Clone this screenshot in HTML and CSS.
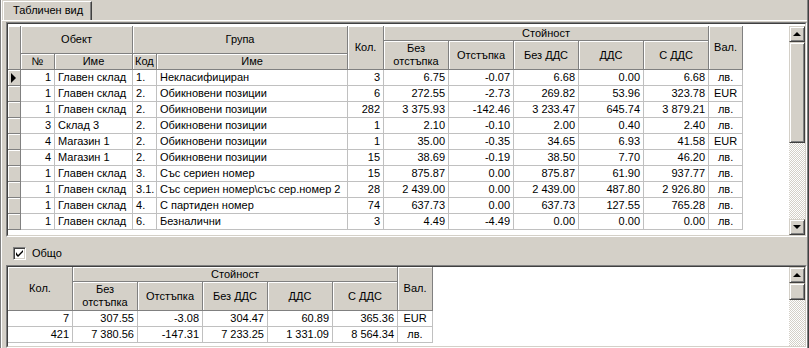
FILE: index.html
```html
<!DOCTYPE html>
<html lang="bg">
  <head>
    <meta charset="UTF-8" />
    <title>Табличен вид</title>
    <link rel="stylesheet" href="styles.css">
  </head>
  <body>
    <div class="window">
      <div class="tabs">
        <div class="tab">Табличен вид</div>
      </div>
      <div class="page">
        <!-- main grid -->
        <div class="grid grid-main">
          <div class="grid-inner">
            <div class="grid-body">
              <table class="tbl tbl-main">
                <colgroup>
                  <col class="w-ind"><col class="w-no"><col class="w-obj"><col class="w-code"><col class="w-grp">
                  <col class="w-qty"><col class="w-val"><col class="w-val"><col class="w-val"><col class="w-val"><col class="w-val">
                  <col class="w-cur">
                </colgroup>
                <thead>
                  <tr class="ha">
                    <th class="ind" rowspan="3"></th>
                    <th colspan="2" rowspan="2">Обект</th>
                    <th colspan="2" rowspan="2">Група</th>
                    <th rowspan="3">Кол.</th>
                    <th colspan="5">Стойност</th>
                    <th rowspan="3">Вал.</th>
                  </tr>
                  <tr class="hb">
                    <th rowspan="2">Без<br>отстъпка</th>
                    <th rowspan="2">Отстъпка</th>
                    <th rowspan="2">Без ДДС</th>
                    <th rowspan="2">ДДС</th>
                    <th rowspan="2">С ДДС</th>
                  </tr>
                  <tr class="hc">
                    <th>№</th>
                    <th>Име</th>
                    <th class="left">Код</th>
                    <th>Име</th>
                  </tr>
                </thead>
                <tbody>
                  <tr>
                    <td class="ind"><span class="cursor"></span></td>
                    <td class="num">1</td><td>Главен склад</td><td>1.</td><td>Некласифициран</td>
                    <td class="num">3</td><td class="num">6.75</td><td class="num">-0.07</td><td class="num">6.68</td><td class="num">0.00</td><td class="num">6.68</td><td class="cur">лв.</td>
                  </tr>
                  <tr>
                    <td class="ind"></td>
                    <td class="num">1</td><td>Главен склад</td><td>2.</td><td>Обикновени позиции</td>
                    <td class="num">6</td><td class="num">272.55</td><td class="num">-2.73</td><td class="num">269.82</td><td class="num">53.96</td><td class="num">323.78</td><td class="cur">EUR</td>
                  </tr>
                  <tr>
                    <td class="ind"></td>
                    <td class="num">1</td><td>Главен склад</td><td>2.</td><td>Обикновени позиции</td>
                    <td class="num">282</td><td class="num">3&nbsp;375.93</td><td class="num">-142.46</td><td class="num">3&nbsp;233.47</td><td class="num">645.74</td><td class="num">3&nbsp;879.21</td><td class="cur">лв.</td>
                  </tr>
                  <tr>
                    <td class="ind"></td>
                    <td class="num">3</td><td>Склад 3</td><td>2.</td><td>Обикновени позиции</td>
                    <td class="num">1</td><td class="num">2.10</td><td class="num">-0.10</td><td class="num">2.00</td><td class="num">0.40</td><td class="num">2.40</td><td class="cur">лв.</td>
                  </tr>
                  <tr>
                    <td class="ind"></td>
                    <td class="num">4</td><td>Магазин 1</td><td>2.</td><td>Обикновени позиции</td>
                    <td class="num">1</td><td class="num">35.00</td><td class="num">-0.35</td><td class="num">34.65</td><td class="num">6.93</td><td class="num">41.58</td><td class="cur">EUR</td>
                  </tr>
                  <tr>
                    <td class="ind"></td>
                    <td class="num">4</td><td>Магазин 1</td><td>2.</td><td>Обикновени позиции</td>
                    <td class="num">15</td><td class="num">38.69</td><td class="num">-0.19</td><td class="num">38.50</td><td class="num">7.70</td><td class="num">46.20</td><td class="cur">лв.</td>
                  </tr>
                  <tr>
                    <td class="ind"></td>
                    <td class="num">1</td><td>Главен склад</td><td>3.</td><td>Със сериен номер</td>
                    <td class="num">15</td><td class="num">875.87</td><td class="num">0.00</td><td class="num">875.87</td><td class="num">61.90</td><td class="num">937.77</td><td class="cur">лв.</td>
                  </tr>
                  <tr>
                    <td class="ind"></td>
                    <td class="num">1</td><td>Главен склад</td><td>3.1.</td><td>Със сериен номер\със сер.номер 2</td>
                    <td class="num">28</td><td class="num">2&nbsp;439.00</td><td class="num">0.00</td><td class="num">2&nbsp;439.00</td><td class="num">487.80</td><td class="num">2&nbsp;926.80</td><td class="cur">лв.</td>
                  </tr>
                  <tr>
                    <td class="ind"></td>
                    <td class="num">1</td><td>Главен склад</td><td>4.</td><td>С партиден номер</td>
                    <td class="num">74</td><td class="num">637.73</td><td class="num">0.00</td><td class="num">637.73</td><td class="num">127.55</td><td class="num">765.28</td><td class="cur">лв.</td>
                  </tr>
                  <tr>
                    <td class="ind"></td>
                    <td class="num">1</td><td>Главен склад</td><td>6.</td><td>Безналични</td>
                    <td class="num">3</td><td class="num">4.49</td><td class="num">-4.49</td><td class="num">0.00</td><td class="num">0.00</td><td class="num">0.00</td><td class="cur">лв.</td>
                  </tr>
                </tbody>
              </table>
            </div>
            <div class="vscroll">
              <div class="sb-btn"><span class="arrow-up"></span></div>
              <div class="sb-thumb thumb-main"></div>
              <div class="sb-track"></div>
              <div class="sb-btn"><span class="arrow-down"></span></div>
            </div>
          </div>
        </div>

        <div class="totals-bar">
          <label class="check">
            <span class="check-box">
              <svg width="7" height="7" viewBox="0 0 7 7"><path d="M0 2v3l2 2 5-5V-0L2 5z" fill="#000"/></svg>
            </span>
            Общо
          </label>
        </div>

        <!-- totals grid -->
        <div class="grid grid-totals">
          <div class="grid-inner">
            <div class="grid-body">
              <table class="tbl tbl-totals">
                <colgroup>
                  <col class="w-val"><col class="w-val"><col class="w-val"><col class="w-val"><col class="w-val"><col class="w-val">
                  <col class="w-cur2">
                </colgroup>
                <thead>
                  <tr class="ha">
                    <th rowspan="2">Кол.</th>
                    <th colspan="5">Стойност</th>
                    <th rowspan="2">Вал.</th>
                  </tr>
                  <tr class="hd">
                    <th>Без<br>отстъпка</th>
                    <th>Отстъпка</th>
                    <th>Без ДДС</th>
                    <th>ДДС</th>
                    <th>С ДДС</th>
                  </tr>
                </thead>
                <tbody>
                  <tr>
                    <td class="num">7</td><td class="num">307.55</td><td class="num">-3.08</td><td class="num">304.47</td><td class="num">60.89</td><td class="num">365.36</td><td class="cur">EUR</td>
                  </tr>
                  <tr>
                    <td class="num">421</td><td class="num">7&nbsp;380.56</td><td class="num">-147.31</td><td class="num">7&nbsp;233.25</td><td class="num">1&nbsp;331.09</td><td class="num">8&nbsp;564.34</td><td class="cur">лв.</td>
                  </tr>
                </tbody>
              </table>
            </div>
            <div class="vscroll">
              <div class="sb-btn"><span class="arrow-up"></span></div>
              <div class="sb-thumb thumb-totals"></div>
              <div class="sb-track"></div>
            </div>
          </div>
        </div>
      </div>
    </div>
  </body>
</html>
```

FILE: styles.css
```css
/* Windows classic look */
* {
  box-sizing: border-box;
}

body {
  margin: 0;
  background: #d4d0c8;
  font-family: "Liberation Sans", Arial, sans-serif;
  font-size: 11px;
  color: #000;
}

.window {
  width: 809px;
  height: 348px;
  overflow: hidden;
  display: flex;
  flex-direction: column;
  padding: 0 2px;
  box-shadow: inset 1px 0 #808080, inset 2px 0 #fff, inset -1px 0 #404040, inset -2px 0 #808080;
}

/* Tabs */
.tabs {
  height: 20px;
  padding-left: 1px;
  display: flex;
  align-items: flex-end;
}

.tab {
  height: 19px;
  padding: 0 8px 0 9px;
  line-height: 17px;
  border: 1px solid #fff;
  border-right-color: #404040;
  border-bottom: 0;
  box-shadow: inset -1px 0 #808080;
  background: #d4d0c8;
  position: relative;
  z-index: 1;
}

.page {
  flex: 1;
  display: flex;
  flex-direction: column;
  border-top: 1px solid #fff;
  padding: 1px 0 0 4px;
  min-height: 0;
}

/* Sunken grid frame */
.grid {
  border: 1px solid;
  border-color: #808080 #fff #fff #808080;
}

.grid-inner {
  height: 100%;
  border: 1px solid;
  border-color: #404040 #d4d0c8 #d4d0c8 #404040;
  background: #fff;
  display: flex;
}

.grid-main {
  height: 215px;
}

.grid-main .grid-inner {
  padding-top: 2px;
}

.grid-totals {
  flex: 1;
  min-height: 0;
}

.grid-body {
  flex: 1;
  overflow: hidden;
}

/* Tables */
.tbl {
  table-layout: fixed;
  border-collapse: separate;
  border-spacing: 0;
}

.tbl-main {
  width: 735px;
}

.tbl-totals {
  width: 425px;
}

.w-ind { width: 13px; }
.w-no { width: 34px; }
.w-obj { width: 78px; }
.w-code { width: 24px; }
.w-grp { width: 191px; }
.w-qty { width: 36px; }
.w-val { width: 65px; }
.w-cur { width: 34px; }
.w-cur2 { width: 35px; }

.tbl th {
  background: #d4d0c8;
  font-weight: normal;
  padding: 0;
  text-align: center;
  vertical-align: middle;
  line-height: 13px;
  border-right: 1px solid #808080;
  border-bottom: 1px solid #808080;
  box-shadow: inset 1px 1px #fff;
  white-space: nowrap;
  overflow: hidden;
}

.tbl th.left {
  text-align: left;
  padding-left: 2px;
}

.ha {
  height: 15px;
}

.hb {
  height: 13px;
}

.hc {
  height: 16px;
}

.hd {
  height: 29px;
}

.tbl td {
  height: 16px;
  padding: 0 2px 0 3px;
  line-height: 15px;
  border-right: 1px solid #c0c0c0;
  border-bottom: 1px solid #c0c0c0;
  white-space: nowrap;
  overflow: hidden;
}

.tbl td.num {
  text-align: right;
  padding: 0 3px 0 2px;
}

.tbl td.cur {
  text-align: center;
  padding: 0;
}

.tbl .ind {
  background: #d4d0c8;
  padding: 0;
  border-right: 1px solid #808080;
  border-bottom: 1px solid #808080;
  box-shadow: inset 1px 1px #fff;
}

.cursor {
  display: block;
  width: 0;
  height: 0;
  margin-left: 3px;
  border-left: 5px solid #000;
  border-top: 5px solid transparent;
  border-bottom: 5px solid transparent;
}

/* Scrollbar */
.vscroll {
  width: 16px;
  display: flex;
  flex-direction: column;
}

.sb-btn,
.sb-thumb {
  background: #d4d0c8;
  border: 1px solid;
  border-color: #d4d0c8 #404040 #404040 #d4d0c8;
  box-shadow: inset 1px 1px #fff, inset -1px -1px #808080;
}

.sb-btn {
  height: 16px;
  display: flex;
  align-items: center;
  justify-content: center;
}

.thumb-main {
  height: 101px;
}

.thumb-totals {
  height: 17px;
}

.sb-track {
  flex: 1;
  background: repeating-conic-gradient(#d4d0c8 0 25%, #fff 0 50%) 0 0 / 2px 2px;
}

.arrow-up,
.arrow-down {
  width: 0;
  height: 0;
  border-left: 4px solid transparent;
  border-right: 4px solid transparent;
}

.arrow-up {
  border-bottom: 4px solid #000;
}

.arrow-down {
  border-top: 4px solid #000;
}

/* Totals checkbox */
.totals-bar {
  height: 28px;
  padding: 10px 0 0 7px;
}

.check {
  display: flex;
  align-items: center;
  gap: 6px;
  line-height: 13px;
}

.check-box {
  width: 13px;
  height: 13px;
  background: #fff;
  border: 1px solid;
  border-color: #808080 #fff #fff #808080;
  box-shadow: inset 1px 1px #404040, inset -1px -1px #d4d0c8;
  display: flex;
  align-items: center;
  justify-content: center;
}
```
